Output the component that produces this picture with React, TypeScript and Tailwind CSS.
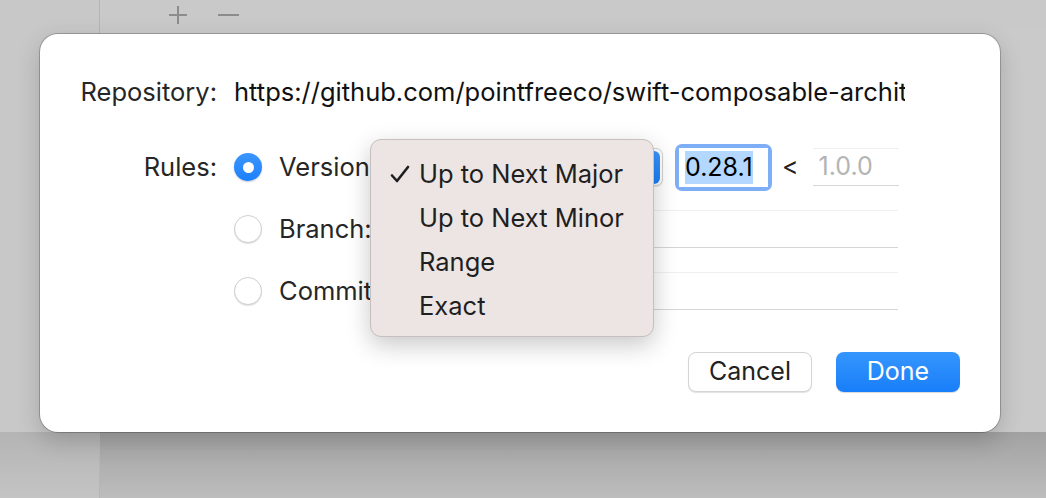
import React from "react";

const font = { fontFamily: "Inter, 'Noto Sans', 'Liberation Sans', sans-serif" };

function Radio({ checked }: { checked?: boolean }) {
  if (checked) {
    return (
      <span className="flex h-[28px] w-[28px] shrink-0 items-center justify-center rounded-full bg-gradient-to-b from-[#3b95fd] to-[#1b80fa] shadow-[0_1px_2px_rgba(0,0,0,0.2)]">
        <span className="h-[11px] w-[11px] rounded-full bg-white" />
      </span>
    );
  }
  return (
    <span className="h-[28px] w-[28px] shrink-0 rounded-full border border-[#cfcfcf] bg-white shadow-[0_1px_1px_rgba(0,0,0,0.12)]" />
  );
}

function Field({ className = "", children }: { className?: string; children?: React.ReactNode }) {
  return (
    <div
      className={
        "flex h-[38px] items-center border-t border-[#f0f0f0] border-b border-b-[#d6d6d6] bg-white px-[6px] " +
        className
      }
    >
      {children}
    </div>
  );
}

function CheckMark() {
  return (
    <svg width="20" height="18" viewBox="0 0 20 18" className="shrink-0">
      <path d="M2 10.5 L7 16 L18 2" fill="none" stroke="#1f1f1f" strokeWidth="2.6" strokeLinecap="round" strokeLinejoin="round" />
    </svg>
  );
}

const menuItems = ["Up to Next Major", "Up to Next Minor", "Range", "Exact"];

export default function App() {
  return (
    <div className="relative flex h-[498px] w-[1046px] overflow-hidden bg-[#c9c9c9] text-[#262626]" style={font}>
      <div className="flex w-[100px] shrink-0 flex-col border-r border-[#b6b6b6]">
        <div className="flex-1 bg-[#c8c8c8]" />
        <div className="h-[66px] bg-gradient-to-b from-[#b4b4b4] to-[#c4c4c4]" />
      </div>
      <div className="flex flex-1 flex-col">
        <div className="flex h-[30px] items-center gap-[30px] pl-[68px]">
          <svg width="20" height="20" viewBox="0 0 20 20">
            <path d="M10 1 V19 M1 10 H19" stroke="#8c8c8c" strokeWidth="2" />
          </svg>
          <svg width="21" height="20" viewBox="0 0 21 20">
            <path d="M0 10 H21" stroke="#8c8c8c" strokeWidth="2" />
          </svg>
        </div>
        <div className="flex-1 bg-[#cacaca]" />
        <div className="h-[66px] bg-gradient-to-b from-[#a2a2a2] to-[#bdbdbd]" />
      </div>

      {/* sheet */}
      <div className="absolute left-[40px] top-[34px] flex h-[398px] w-[960px] flex-col rounded-[18px] bg-white pt-[33px] pb-[40px] shadow-[0_0_0_1px_rgba(0,0,0,0.22),0_8px_24px_rgba(0,0,0,0.18)]">
        <div className="flex h-[50px] items-center">
          <div className="w-[177px] shrink-0 text-right text-[25.5px]">Repository:</div>
          <div className="ml-[17px] w-[671px] overflow-hidden whitespace-nowrap text-[25.5px] text-[#111]">
            https://github.com/pointfreeco/swift-composable-architecture
          </div>
        </div>

        <div className="mt-[25px] flex h-[50px] items-center">
          <div className="w-[177px] shrink-0 text-right text-[25.5px]">Rules:</div>
          <div className="ml-[17px] flex items-center">
            <Radio checked />
            <div className="ml-[17px] w-[104px] whitespace-nowrap text-[25.5px]">Version:</div>
            <div className="flex h-[38px] w-[280px] items-center justify-end rounded-[7px] border border-[#d2d2d2] bg-white shadow-[0_1px_1px_rgba(0,0,0,0.1)]">
              <div className="mr-[2px] h-[33px] w-[30px] rounded-[6px] bg-gradient-to-b from-[#3b95fd] to-[#1b80fa]" />
            </div>
            <div className="ml-[12px] rounded-[7px] bg-[#7eaef5] p-[4px]">
              <div className="flex h-[39px] w-[89px] items-center overflow-hidden bg-white px-[6px] text-[25px] text-black">
                <span className="bg-[#b3d7ff] leading-[33px]">0.28.1</span>
              </div>
            </div>
            <div className="ml-[10px] text-[25px] text-[#222]">&lt;</div>
            <Field className="ml-[14px] w-[86px] text-[25px] text-[#b4b4b4]">1.0.0</Field>
          </div>
        </div>

        <div className="mt-[12px] flex h-[50px] items-center">
          <div className="w-[177px] shrink-0" />
          <div className="ml-[17px] flex items-center">
            <Radio />
            <div className="ml-[17px] w-[104px] whitespace-nowrap text-[25.5px]">Branch:</div>
            <Field className="w-[515px]" />
          </div>
        </div>

        <div className="mt-[12px] flex h-[50px] items-center">
          <div className="w-[177px] shrink-0" />
          <div className="ml-[17px] flex items-center">
            <Radio />
            <div className="ml-[17px] w-[104px] whitespace-nowrap text-[25.5px]">Commit:</div>
            <Field className="w-[515px]" />
          </div>
        </div>

        <div className="mt-[36px] flex justify-end gap-[24px] pr-[40px]">
          <button className="h-[40px] w-[124px] rounded-[8px] border border-[#d4d4d4] bg-white text-[25px] text-[#222] shadow-[0_1px_1px_rgba(0,0,0,0.12)]">
            Cancel
          </button>
          <button className="h-[40px] w-[124px] rounded-[8px] bg-gradient-to-b from-[#3596fd] to-[#187ef9] text-[25px] text-white shadow-[0_1px_1px_rgba(0,0,0,0.15)]">
            Done
          </button>
        </div>

        {/* popup menu */}
        <div className="absolute left-[330px] top-[105px] flex w-[284px] flex-col rounded-[11px] border border-[#c6bfbe] bg-[#ede5e3] pt-[12px] pb-[8px] shadow-[0_8px_24px_rgba(0,0,0,0.22)]">
          {menuItems.map((item, i) => (
            <div key={item} className="flex h-[44px] items-center whitespace-nowrap text-[25.5px] text-[#1f1f1f]">
              <div className="flex w-[48px] justify-end pr-[9px]">{i === 0 && <CheckMark />}</div>
              <span>{item}</span>
            </div>
          ))}
        </div>
      </div>
    </div>
  );
}
